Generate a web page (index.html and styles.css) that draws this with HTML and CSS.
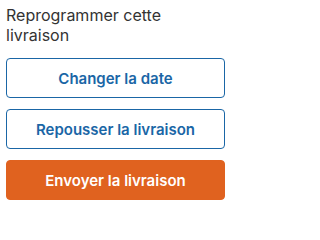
FILE: index.html
```html
<!DOCTYPE html>
<html lang="fr">
<head>
<meta charset="utf-8">
<link rel="stylesheet" href="styles.css">
</head>
<body>
<section class="panel">
  <h2 class="title">Reprogrammer cette livraison</h2>
  <div class="actions">
    <button class="btn btn-outline">Changer la date</button>
    <button class="btn btn-outline">Repousser la livraison</button>
    <button class="btn btn-primary">Envoyer la livraison</button>
  </div>
</section>
</body>
</html>
```
FILE: styles.css
```css
html, body {
  margin: 0;
  padding: 0;
  background: #fff;
}
.panel {
  width: 219px;
  padding: 5px 0 0 6px;
  font-family: Inter, "Liberation Sans", sans-serif;
}
.title {
  margin: 0;
  max-width: 180px;
  font-size: 16px;
  line-height: 20px;
  font-weight: 400;
  color: #333;
}
.actions {
  margin-top: 13px;
  display: flex;
  flex-direction: column;
  gap: 11px;
}
.btn {
  height: 40px;
  border-radius: 4px;
  font-family: Inter, "Liberation Sans", sans-serif;
  font-size: 15px;
  font-weight: 600;
  cursor: pointer;
  padding: 0;
}
.btn-outline {
  background: #fff;
  border: 1px solid #1a66a6;
  color: #1a66a6;
}
.btn-primary {
  background: #e0621f;
  border: 1px solid #e0621f;
  color: #fff;
}
```
